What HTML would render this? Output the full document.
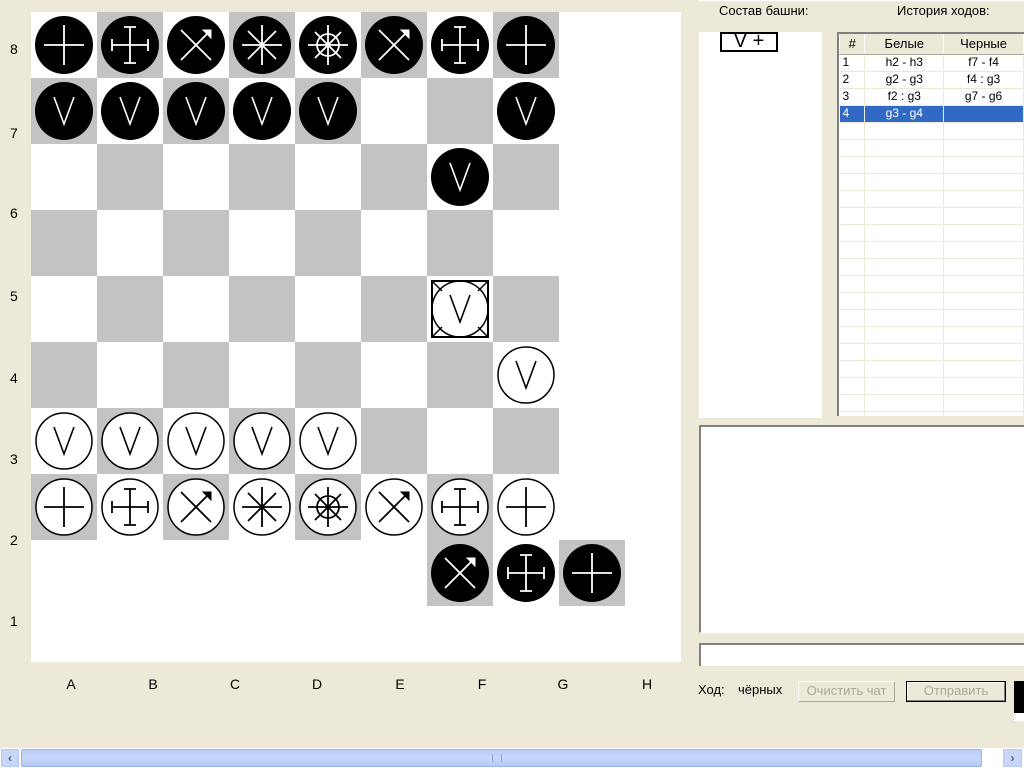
<!DOCTYPE html>
<html><head><meta charset="utf-8">
<style>
*{margin:0;padding:0;box-sizing:border-box}
body{width:1024px;height:768px;background:#ECE9D8;position:relative;overflow:hidden;font-family:"Liberation Sans","DejaVu Sans",sans-serif;font-size:12px;color:#000}
.a{position:absolute}
.lbl{position:absolute;font-size:14px}
.tb{position:absolute;left:837px;top:32px;width:187px;height:384px;background:#fff;border-left:2px solid #808080;border-top:2px solid #808080;overflow:hidden}
.tb table{border-collapse:collapse;font-size:12px;table-layout:fixed}
.tb td{height:17px;border-right:1px solid #ECE9D8;border-bottom:1px solid #ECE9D8;text-align:center;padding:0;line-height:15px}
.tb td.n{text-align:left;padding-left:3px}
.tb th{height:20px;background:#ECE9D8;font-weight:normal;border-right:1px solid #fff;border-bottom:1px solid #ACA899;font-size:13px;border-left:1px solid #fff}
.sel td{background:#316AC5;color:#fff}
.btn{position:absolute;border:1px solid #888;background:#ECE9D8;color:#ACA899;font-size:13px;text-align:center;line-height:18px}
</style></head><body>
<div class="a" style="left:31px;top:12px;width:650px;height:650px;background:#fff"></div>
<svg class="a" style="left:0;top:0" width="690" height="710" viewBox="0 0 690 710">
<defs>
<g id="plus" fill="none" stroke-width="1.8"><path d="M-20 0H20M0-20V20"/></g>
<g id="icr" fill="none" stroke-width="1.8"><path d="M-18 0H18M0-18V18M-18-6V6M18-6V6M-6-18H6M-6 18H6"/></g>
<g id="xar" fill="none" stroke-width="1.8"><path d="M-15-15L15 15M-15 15L15-15"/><path d="M7-15H15V-7Z" stroke-width="1" fill="currentColor"/></g>
<g id="ast" fill="none" stroke-width="1.8"><path d="M-20 0H20M0-20V20M-14-14L14 14M-14 14L14-14"/></g>
<g id="whl" fill="none" stroke-width="1.8"><circle r="11"/><path d="M-20 0H20M0-20V20M-13-13L13 13M-13 13L13-13"/></g>
<g id="vv" fill="none" stroke-width="1.6"><path d="M-10-14L0 13L10-14"/></g>
</defs>
<g fill="#C3C3C3">
<rect x="97" y="12" width="66" height="66"/><rect x="229" y="12" width="66" height="66"/><rect x="361" y="12" width="66" height="66"/><rect x="493" y="12" width="66" height="66"/>
<rect x="31" y="78" width="66" height="66"/><rect x="163" y="78" width="66" height="66"/><rect x="295" y="78" width="66" height="66"/><rect x="427" y="78" width="66" height="66"/>
<rect x="97" y="144" width="66" height="66"/><rect x="229" y="144" width="66" height="66"/><rect x="361" y="144" width="66" height="66"/><rect x="493" y="144" width="66" height="66"/>
<rect x="31" y="210" width="66" height="66"/><rect x="163" y="210" width="66" height="66"/><rect x="295" y="210" width="66" height="66"/><rect x="427" y="210" width="66" height="66"/>
<rect x="97" y="276" width="66" height="66"/><rect x="229" y="276" width="66" height="66"/><rect x="361" y="276" width="66" height="66"/><rect x="493" y="276" width="66" height="66"/>
<rect x="31" y="342" width="66" height="66"/><rect x="163" y="342" width="66" height="66"/><rect x="295" y="342" width="66" height="66"/><rect x="427" y="342" width="66" height="66"/>
<rect x="97" y="408" width="66" height="66"/><rect x="229" y="408" width="66" height="66"/><rect x="361" y="408" width="66" height="66"/><rect x="493" y="408" width="66" height="66"/>
<rect x="31" y="474" width="66" height="66"/><rect x="163" y="474" width="66" height="66"/><rect x="295" y="474" width="66" height="66"/><rect x="427" y="474" width="66" height="66"/>
<rect x="427" y="540" width="66" height="66"/><rect x="559" y="540" width="66" height="66"/>
</g>
<g fill="#000"><circle cx="64" cy="45" r="29"/><circle cx="130" cy="45" r="29"/><circle cx="196" cy="45" r="29"/><circle cx="262" cy="45" r="29"/><circle cx="328" cy="45" r="29"/><circle cx="394" cy="45" r="29"/><circle cx="460" cy="45" r="29"/><circle cx="526" cy="45" r="29"/>
<circle cx="64" cy="111" r="29"/><circle cx="130" cy="111" r="29"/><circle cx="196" cy="111" r="29"/><circle cx="262" cy="111" r="29"/><circle cx="328" cy="111" r="29"/><circle cx="526" cy="111" r="29"/>
<circle cx="460" cy="177" r="29"/>
<circle cx="460" cy="573" r="29"/><circle cx="526" cy="573" r="29"/><circle cx="592" cy="573" r="29"/></g>
<g stroke="#fff" color="#fff">
<use href="#plus" x="64" y="45"/><use href="#icr" x="130" y="45"/><use href="#xar" x="196" y="45"/><use href="#ast" x="262" y="45"/><use href="#whl" x="328" y="45"/><use href="#xar" x="394" y="45"/><use href="#icr" x="460" y="45"/><use href="#plus" x="526" y="45"/>
<use href="#vv" x="64" y="111"/><use href="#vv" x="130" y="111"/><use href="#vv" x="196" y="111"/><use href="#vv" x="262" y="111"/><use href="#vv" x="328" y="111"/><use href="#vv" x="526" y="111"/>
<use href="#vv" x="460" y="177"/>
<use href="#xar" x="460" y="573"/><use href="#icr" x="526" y="573"/><use href="#plus" x="592" y="573"/>
</g>
<g fill="#fff" stroke="#000" stroke-width="1.5">
<circle cx="460" cy="309" r="28"/><circle cx="526" cy="375" r="28"/>
<circle cx="64" cy="441" r="28"/><circle cx="130" cy="441" r="28"/><circle cx="196" cy="441" r="28"/><circle cx="262" cy="441" r="28"/><circle cx="328" cy="441" r="28"/>
<circle cx="64" cy="507" r="28"/><circle cx="130" cy="507" r="28"/><circle cx="196" cy="507" r="28"/><circle cx="262" cy="507" r="28"/><circle cx="328" cy="507" r="28"/><circle cx="394" cy="507" r="28"/><circle cx="460" cy="507" r="28"/><circle cx="526" cy="507" r="28"/>
</g>
<g stroke="#000" color="#000">
<use href="#vv" x="460" y="309"/><use href="#vv" x="526" y="375"/>
<use href="#vv" x="64" y="441"/><use href="#vv" x="130" y="441"/><use href="#vv" x="196" y="441"/><use href="#vv" x="262" y="441"/><use href="#vv" x="328" y="441"/>
<use href="#plus" x="64" y="507"/><use href="#icr" x="130" y="507"/><use href="#xar" x="196" y="507"/><use href="#ast" x="262" y="507"/><use href="#whl" x="328" y="507"/><use href="#xar" x="394" y="507"/><use href="#icr" x="460" y="507"/><use href="#plus" x="526" y="507"/>
</g>
<rect x="432" y="281" width="56" height="56" fill="none" stroke="#000" stroke-width="2"/>
<g stroke="#000" stroke-width="1.5"><path d="M432 281L442 291M488 281L478 291M432 337L442 327M488 337L478 327"/></g>
<g font-family="Liberation Sans, sans-serif" font-size="14" fill="#000">
<text x="10" y="54">8</text><text x="10" y="138">7</text><text x="10" y="218">6</text><text x="10" y="301">5</text><text x="10" y="383">4</text><text x="10" y="464">3</text><text x="10" y="545">2</text><text x="10" y="626">1</text>
<g text-anchor="middle"><text x="71" y="689">A</text><text x="153" y="689">B</text><text x="235" y="689">C</text><text x="317" y="689">D</text><text x="400" y="689">E</text><text x="482" y="689">F</text><text x="563" y="689">G</text><text x="647" y="689">H</text></g>
</g>
</svg>
<div class="a" style="left:699px;top:0;width:325px;height:1px;background:#fff"></div>
<div class="lbl" style="left:719px;top:3px;font-size:13px">Состав башни:</div>
<div class="lbl" style="left:897px;top:3px;font-size:13px">История ходов:</div>
<div class="a" style="left:699px;top:32px;width:123px;height:386px;background:#fff"></div>
<div class="a" style="left:720px;top:32px;width:58px;height:20px;border:2px solid #000;font-size:20px;line-height:15px;text-align:center;background:#fff">V&nbsp;+</div>
<div class="tb"><table>
<colgroup><col style="width:26px"><col style="width:80px"><col style="width:81px"></colgroup>
<tr><th>#</th><th>Белые</th><th>Черные</th></tr>
<tr><td class="n">1</td><td>h2 - h3</td><td>f7 - f4</td></tr>
<tr><td class="n">2</td><td>g2 - g3</td><td>f4 : g3</td></tr>
<tr><td class="n">3</td><td>f2 : g3</td><td>g7 - g6</td></tr>
<tr class="sel"><td class="n">4</td><td>g3 - g4</td><td></td></tr>
<tr><td></td><td></td><td></td></tr><tr><td></td><td></td><td></td></tr><tr><td></td><td></td><td></td></tr><tr><td></td><td></td><td></td></tr><tr><td></td><td></td><td></td></tr><tr><td></td><td></td><td></td></tr><tr><td></td><td></td><td></td></tr><tr><td></td><td></td><td></td></tr><tr><td></td><td></td><td></td></tr><tr><td></td><td></td><td></td></tr><tr><td></td><td></td><td></td></tr><tr><td></td><td></td><td></td></tr><tr><td></td><td></td><td></td></tr><tr><td></td><td></td><td></td></tr><tr><td></td><td></td><td></td></tr><tr><td></td><td></td><td></td></tr><tr><td></td><td></td><td></td></tr><tr><td></td><td></td><td></td></tr>
</table></div>
<div class="a" style="left:699px;top:425px;width:325px;height:208px;background:#fff;border-left:2px solid #808080;border-top:2px solid #808080;border-bottom:1px solid #fff"></div>
<div class="a" style="left:699px;top:643px;width:325px;height:23px;background:#fff;border-left:2px solid #808080;border-top:2px solid #808080"></div>
<div class="lbl" style="left:698px;top:682px;font-size:13px">Ход:</div>
<div class="lbl" style="left:738px;top:682px;font-size:13px">чёрных</div>
<div class="btn" style="left:798px;top:681px;width:97px;height:21px;border-color:#fff #ACA899 #ACA899 #fff">Очистить чат</div>
<div class="btn" style="left:906px;top:681px;width:100px;height:21px;border:1px solid #000;box-shadow:inset -1px -1px #808080,inset 1px 1px #fff">Отправить</div>
<div class="a" style="left:1014px;top:681px;width:10px;height:32px;background:#000"></div>
<div class="a" style="left:1014px;top:713px;width:10px;height:8px;background:#fff"></div>
<div class="a" style="left:0;top:748px;width:1024px;height:20px;background:#fff"></div>
<div class="a" style="left:1px;top:749px;width:18px;height:18px;background:#C8D6F8;border:1px solid #B4C8F2;color:#4D6185;font-size:12px;text-align:center;line-height:16px;font-weight:bold">‹</div>
<div class="a" style="left:21px;top:749px;width:961px;height:18px;background:linear-gradient(#B9CCF7,#C6D6FB 50%,#B6C9F5);border:1px solid #9DB4EA;border-radius:2px"></div>
<div class="a" style="left:492px;top:754px;width:10px;height:8px;border-left:1px solid #8FA6D8;border-right:1px solid #8FA6D8"></div>
<div class="a" style="left:1003px;top:749px;width:19px;height:18px;background:#C8D6F8;border:1px solid #B4C8F2;color:#4D6185;font-size:12px;text-align:center;line-height:16px;font-weight:bold">›</div>
</body></html>
